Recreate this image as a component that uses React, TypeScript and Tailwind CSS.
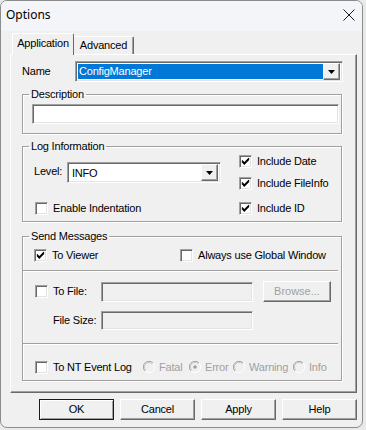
import React from 'react'

const raised =
  'border border-t-white border-l-white border-r-[#696969] border-b-[#696969] shadow-[inset_-1px_-1px_0_#a0a0a0]'
const sunken =
  'border border-t-[#a0a0a0] border-l-[#a0a0a0] border-r-white border-b-white shadow-[inset_1px_1px_0_#696969,inset_-1px_-1px_0_#e3e3e3]'

function Check({ checked }: { checked?: boolean }) {
  return (
    <span className={`${sunken} w-[13px] h-[13px] bg-white shrink-0 flex items-center justify-center`}>
      {checked && (
        <svg width="9" height="9" viewBox="0 0 9 9">
          <path d="M1 3.5 L3.3 6 L8 1.2 M1 4.7 L3.3 7.2 L8 2.4" stroke="#000" strokeWidth="1.2" fill="none" />
        </svg>
      )}
    </span>
  )
}

function CheckRow({ checked, label, className = '' }: { checked?: boolean; label: string; className?: string }) {
  return (
    <div className={`flex items-center h-[13px] ${className}`}>
      <Check checked={checked} />
      <span className="ml-[5px] leading-[13px] whitespace-nowrap">{label}</span>
    </div>
  )
}

function Radio({ dot, label, width }: { dot?: boolean; label: string; width: string }) {
  return (
    <div className={`flex items-center ${width}`}>
      <svg width="12" height="12" viewBox="0 0 12 12" className="shrink-0">
        <path d="M10 2 A5.5 5.5 0 0 0 2 10" stroke="#a0a0a0" strokeWidth="1" fill="none" />
        <path d="M9.2 2.8 A4.5 4.5 0 0 0 2.8 9.2" stroke="#c8c8c8" strokeWidth="1" fill="none" />
        <path d="M2 10 A5.5 5.5 0 0 0 10 2" stroke="#ffffff" strokeWidth="1" fill="none" />
        {dot && <circle cx="6" cy="6" r="1.8" fill="#a0a0a0" />}
      </svg>
      <span className="ml-[4px] text-[#a0a0a0] whitespace-nowrap">{label}</span>
    </div>
  )
}

function Arrow() {
  return (
    <span className={`${raised} w-[17px] h-[17px] bg-[#f0f0f0] flex items-center justify-center shrink-0`}>
      <svg width="7" height="4" viewBox="0 0 7 4">
        <path d="M0 0 H7 L3.5 4 Z" fill="#000" />
      </svg>
    </span>
  )
}

function Group({ title, children, className = '' }: { title: string; children: React.ReactNode; className?: string }) {
  return (
    <fieldset
      className={`w-[320px] border border-[#a0a0a0] shadow-[inset_1px_1px_0_#fff,1px_1px_0_#fff] ${className}`}
    >
      <legend className="ml-[6px] px-[2px] leading-[13px]">{title}</legend>
      {children}
    </fieldset>
  )
}

function Separator({ className = '' }: { className?: string }) {
  return <div className={`h-[2px] mr-[3px] border-t border-t-[#a0a0a0] border-b border-b-white ${className}`} />
}

function Button({
  label,
  def,
  disabled,
  width = 'w-[75px]',
  className = '',
}: {
  label: string
  def?: boolean
  disabled?: boolean
  width?: string
  className?: string
}) {
  return (
    <div
      className={`h-[21px] ${width} flex items-center justify-center bg-[#f0f0f0] ${
        def ? 'border border-[#1a1a1a] shadow-[inset_1px_1px_0_#fff,inset_-1px_-1px_0_#a0a0a0]' : raised
      } ${disabled ? 'text-[#a0a0a0]' : ''} ${className}`}
    >
      {label}
    </div>
  )
}

export default function App() {
  return (
    <div className="w-[366px] h-[430px] bg-[#e9e9e9] overflow-hidden font-['Liberation_Sans',Arial,sans-serif] text-[11px] tracking-[-0.2px] text-black">
      <div className="w-[363px] h-[428px] bg-[#f0f0f0] border border-[#8c8c8c] rounded-[7px] overflow-hidden">
        {/* title bar */}
        <div className="h-[30px] bg-[#f3f5f8] flex items-center justify-between pl-[5px] pr-[7px]">
          <span className="font-['Noto_Sans',sans-serif] text-[12px] tracking-normal -mt-[2px]">Options</span>
          <svg width="12" height="12" viewBox="0 0 12 12" className="-mt-[2px]">
            <path d="M0.5 0.5 L11.5 11.5 M11.5 0.5 L0.5 11.5" stroke="#1b1b1b" strokeWidth="1" />
          </svg>
        </div>

        {/* tabs */}
        <div className="flex items-end ml-[11px] mt-[2px] h-[21px]">
          <div className="relative z-10 w-[62px] h-[22px] -mb-[1px] bg-[#f0f0f0] border-l border-t border-white border-r border-r-[#696969] rounded-t-[2px] flex items-center justify-center pb-[2px]">
            Application
          </div>
          <div className="w-[60px] h-[18px] bg-[#f0f0f0] border-t border-white border-r border-r-[#696969] shadow-[inset_-1px_0_0_#a0a0a0] rounded-tr-[2px] flex items-center justify-center">
            Advanced
          </div>
        </div>

        {/* tab panel */}
        <div className={`${raised} ml-[9px] w-[347px] h-[339px] pl-[11px]`}>
          {/* name */}
          <div className="flex items-center mt-[6px]">
            <span className="w-[53px]">Name</span>
            <div className={`${sunken} w-[268px] h-[21px] bg-white flex items-center p-[2px]`}>
              <div className="flex-1 h-full bg-[#0078d7] text-white pl-[1px] flex items-center">ConfigManager</div>
              <Arrow />
            </div>
          </div>

          {/* description */}
          <Group title="Description" className="mt-[6px] pb-[9px]">
            <div className={`${sunken} w-[307px] h-[20px] bg-white mt-[3px] ml-[9px]`} />
          </Group>

          {/* log information */}
          <Group title="Log Information" className="mt-[6px] pb-[6px]">
            <div className="flex">
              <div className="w-[205px] pl-[11px]">
                <div className="flex items-center mt-[9px]">
                  <span className="w-[33px] -mt-[2px]">Level:</span>
                  <div className={`${sunken} w-[154px] h-[21px] bg-white flex items-center p-[2px]`}>
                    <span className="flex-1 pl-[2px] pt-[1px]">INFO</span>
                    <Arrow />
                  </div>
                </div>
                <CheckRow label="Enable Indentation" className="mt-[19px] ml-[1px]" />
              </div>
              <div className="flex flex-col ml-[11px]">
                <CheckRow checked label="Include Date" className="mt-[2px]" />
                <CheckRow checked label="Include FileInfo" className="mt-[9px]" />
                <CheckRow checked label="Include ID" className="mt-[12px]" />
              </div>
            </div>
          </Group>

          {/* send messages */}
          <Group title="Send Messages" className="mt-[8px] pb-[4px]">
            <div className="flex mt-[6px] pl-[11px]">
              <CheckRow checked label="To Viewer" className="w-[146px]" />
              <CheckRow label="Always use Global Window" />
            </div>
            <Separator className="mt-[8px]" />
            <div className="flex items-center mt-[9px] pl-[12px]">
              <CheckRow label="To File:" className="w-[66px]" />
              <div className={`${sunken} w-[152px] h-[20px] bg-[#f0f0f0]`} />
              <Button label="Browse..." disabled width="w-[68px]" className="ml-[10px] tracking-normal" />
            </div>
            <div className="flex items-center mt-[9px] pl-[30px]">
              <span className="w-[48px]">File Size:</span>
              <div className={`${sunken} w-[152px] h-[19px] bg-[#f0f0f0]`} />
            </div>
            <Separator className="mt-[13px]" />
            <div className="flex items-center mt-[14px] pl-[12px]">
              <CheckRow label="To NT Event Log" className="w-[108px]" />
              <Radio label="Fatal" width="w-[46px]" />
              <Radio dot label="Error" width="w-[44px]" />
              <Radio label="Warning" width="w-[60px]" />
              <Radio label="Info" width="w-[40px]" />
            </div>
          </Group>
        </div>

        {/* buttons */}
        <div className="flex gap-[6px] ml-[38px] mt-[6px]">
          <Button label="OK" def />
          <Button label="Cancel" />
          <Button label="Apply" />
          <Button label="Help" />
        </div>
      </div>
    </div>
  )
}
